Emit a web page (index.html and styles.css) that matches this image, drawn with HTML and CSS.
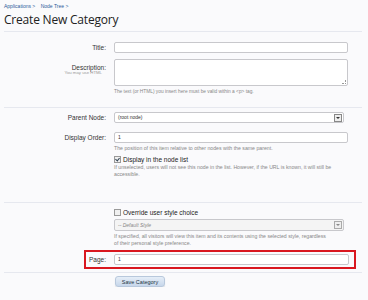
FILE: index.html
```html
<!DOCTYPE html>
<html lang="en">
<head>
    <meta charset="UTF-8">
    <title>Create New Category</title>
    <link rel="stylesheet" href="styles.css">
</head>
<body>
<div class="page">
    <div class="crumbs"><a>Applications &gt;</a> <a>Node Tree &gt;</a></div>
    <h1>Create New Category</h1>

    <div class="section first">
        <div class="row">
            <div class="label">Title:</div>
            <div class="field"><input type="text" class="text"></div>
        </div>
        <div class="row desc-row">
            <div class="label">Description:<span class="sub">You may use HTML</span></div>
            <div class="field">
                <div class="textarea"><span class="grip"></span></div>
                <p class="hint small">The text (or HTML) you insert here must be valid within a &lt;p&gt; tag.</p>
            </div>
        </div>
    </div>

    <div class="section second">
        <div class="row">
            <div class="label">Parent Node:</div>
            <div class="field"><div class="select">(root node)<span class="arrow"></span></div></div>
        </div>
        <div class="row order-row">
            <div class="label">Display Order:</div>
            <div class="field">
                <div class="text">1</div>
                <p class="hint">The position of this item relative to other nodes with the same parent.</p>
            </div>
        </div>
        <div class="row check-row">
            <div class="label"></div>
            <div class="field">
                <div class="check"><span class="box on"></span>Display in the node list</div>
                <p class="hint">If unselected, users will not see this node in the list. However, if the URL is known, it will still be<br>accessible.</p>
            </div>
        </div>
    </div>

    <div class="section third">
        <div class="row">
            <div class="label"></div>
            <div class="field">
                <div class="check"><span class="box"></span>Override user style choice</div>
                <div class="select off"><i>-- Default Style</i><span class="arrow"></span></div>
                <p class="hint">If specified, all visitors will view this item and its contents using the selected style, regardless<br>of their personal style preference.</p>
            </div>
        </div>
        <div class="row marked">
            <div class="label">Page:</div>
            <div class="field"><div class="text">1</div></div>
        </div>
    </div>

    <div class="buttons">
        <div class="label"></div>
        <button>Save Category</button>
    </div>
</div>
</body>
</html>
```

FILE: styles.css
```css
body { margin: 0; background-color: #fafafc; font-family: "Liberation Sans", Arial, sans-serif; color: #333; }
.page { padding: 3px 4px 0 4px; width: 358px; }
.crumbs { font-size: 5px; line-height: 6px; color: #2b5a9a; }
.crumbs a { margin-right: 4px; }
h1 { font-family: "Open Sans", sans-serif; font-weight: normal; font-size: 12px; line-height: 18px; margin: 2px 0 0 0; color: #222; letter-spacing: -0.2px; }
.section { border-top: 1px solid #e6e8ef; }
.section.first { margin-top: 2px; padding-top: 10px; }
.section.second { margin-top: 12px; padding-top: 4px; }
.section.third { margin-top: 24px; padding-top: 5px; }
.row { display: flex; gap: 8px; }
.label { width: 102px; flex: none; text-align: right; font-size: 6.5px; line-height: 11px; color: #333; }
.label .sub { display: block; font-size: 4.3px; line-height: 5px; color: #999; margin-top: -1px; margin-right: 4px; }
.field { width: 234px; }
.text { display: block; width: 234px; height: 11px; box-sizing: border-box; border: 1px solid #c8c8cc; border-radius: 2px; background: #fff; font-size: 5px; line-height: 9px; padding: 0 3px; margin: 0; }
.desc-row { margin-top: 6px; }
.desc-row .label { line-height: 7px; padding-top: 5px; }
.textarea { position: relative; height: 27px; box-sizing: border-box; border: 1px solid #c8c8cc; border-radius: 2px; background: #fff; }
.grip { position: absolute; right: 1px; bottom: 1px; width: 3px; height: 3px; border-right: 1px dotted #999; border-bottom: 1px dotted #999; }
.hint { margin: 2px 0 0 0; font-size: 5.2px; line-height: 7px; color: #888; white-space: nowrap; }
.hint.small { font-size: 4.8px; }
.select { position: relative; width: 230px; height: 11px; box-sizing: border-box; border: 1px solid #c8c8cc; border-radius: 2px; background: #fff; font-size: 5px; line-height: 9px; padding: 0 3px; color: #333; }
.select.off { background: #f4f4f4; color: #888; margin-top: 2px; height: 12px; line-height: 10px; }
.arrow { position: absolute; right: 1px; top: 1px; width: 6px; height: 6px; border: 1px solid #888; background: #eee; }
.arrow::after { content: ""; position: absolute; left: 1px; top: 2px; border-left: 2px solid transparent; border-right: 2px solid transparent; border-top: 2px solid #333; }
.select.off .arrow { border-color: #aaa; }
.select.off .arrow::after { border-top-color: #888; }
.order-row { margin-top: 9px; }
.check-row { margin-top: 3px; }
.check { font-size: 6.5px; line-height: 9px; color: #222; display: flex; align-items: center; gap: 2px; }
.box { width: 5px; height: 5px; border: 1px solid #999; background: #f0f0f0; position: relative; }
.box.on::after { content: ""; position: absolute; left: 1px; top: 0px; width: 2px; height: 3px; border-right: 1px solid #345; border-bottom: 1px solid #345; transform: rotate(40deg); }
.check-row .hint { margin-top: 0; }
.marked { margin: 3px 0 0 80px; padding: 2px 3px 2px 0; border: 2px solid #d9171f; width: 265px; }
.marked .label { width: 20px; }
.marked .text { width: 235px; }
.buttons { display: flex; gap: 9px; border-top: 1px solid #e6e8ef; margin-top: 3px; padding-top: 3px; }
button { font-family: "Liberation Sans", Arial, sans-serif; font-size: 5.5px; color: #234; width: 50px; height: 11px; padding: 0; border: 1px solid #b8c8dc; border-radius: 3px; background: linear-gradient(#e6eef8, #c6d6ea); box-shadow: 0 1px 1px rgba(0,0,0,0.12); }
```
